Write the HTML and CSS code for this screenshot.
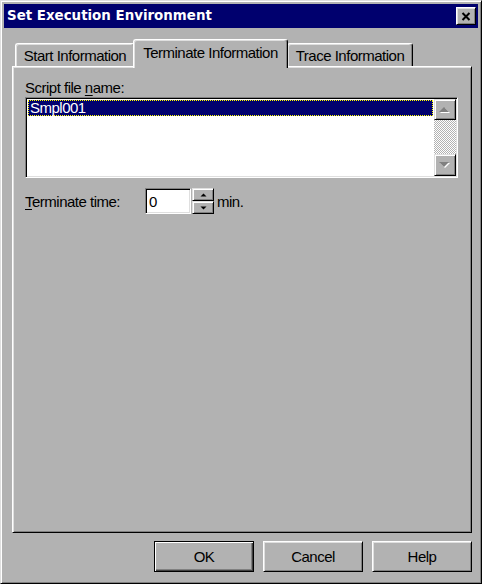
FILE: index.html
```html
<!DOCTYPE html>
<html lang="en">
<head>
<meta charset="utf-8">
<title>Set Execution Environment</title>
<link rel="stylesheet" href="styles.css">
</head>
<body>
<div class="window">
  <div class="titlebar">
    <span class="title">Set Execution Environment</span>
    <button class="close" type="button" aria-label="Close">
      <svg width="10" height="9" viewBox="0 0 10 9"><path d="M1.5 1 L8.5 8 M8.5 1 L1.5 8" stroke="#000" stroke-width="2" fill="none"/></svg>
    </button>
  </div>
  <div class="client">
    <div class="tabs">
      <div class="tab tab-start">Start Information</div>
      <div class="tab tab-active">Terminate Information</div>
      <div class="tab tab-trace">Trace Information</div>
    </div>
    <div class="panel">
      <div class="label">Script file <u>n</u>ame:</div>
      <div class="listbox">
        <div class="list">
          <div class="item selected">Smpl001</div>
        </div>
        <div class="scrollbar">
          <div class="sbtn sbtn-up">
            <svg width="12" height="7" viewBox="0 0 12 7"><polygon points="1,7 6,2 11,7" fill="#fff"/><polygon points="0,6 5,1 10,6" fill="#808080"/></svg>
          </div>
          <div class="track"></div>
          <div class="sbtn sbtn-down">
            <svg width="12" height="7" viewBox="0 0 12 7"><polygon points="1,1 11,1 6,6" fill="#fff"/><polygon points="0,0 10,0 5,5" fill="#808080"/></svg>
          </div>
        </div>
      </div>
      <div class="row">
        <span class="row-label"><u>T</u>erminate time:</span>
        <div class="edit">0</div>
        <div class="spin">
          <div class="spin-btn">
            <svg width="7" height="4" viewBox="0 0 7 4"><polygon points="0.5,3.5 3.5,0.5 6.5,3.5" fill="#000"/></svg>
          </div>
          <div class="spin-btn">
            <svg width="7" height="4" viewBox="0 0 7 4"><polygon points="0.5,0.5 6.5,0.5 3.5,3.5" fill="#000"/></svg>
          </div>
        </div>
        <span class="unit">min.</span>
      </div>
    </div>
    <div class="buttons">
      <button class="btn btn-default" type="button">OK</button>
      <button class="btn" type="button">Cancel</button>
      <button class="btn" type="button">Help</button>
    </div>
  </div>
</div>
</body>
</html>
```

FILE: styles.css
```css
html, body {
  margin: 0;
  padding: 0;
  background: #ffffff;
}

body {
  font-family: "Liberation Sans", Arial, sans-serif;
  font-size: 15px;
  line-height: 17px;
  letter-spacing: -0.5px;
  color: #000;
}

.window {
  width: 482px;
  height: 584px;
  box-sizing: border-box;
  background: #b2b2b2;
  border: 1px solid;
  border-color: #dfdfdf #000 #000 #dfdfdf;
  box-shadow: inset 1px 1px #fff, inset -1px -1px #808080;
  padding: 3px;
  display: flex;
  flex-direction: column;
}

.titlebar {
  height: 24px;
  flex: none;
  background: #00006e;
  display: flex;
  align-items: center;
  justify-content: space-between;
  padding: 0 2px 0 3px;
}

.title {
  font-family: "DejaVu Sans", Verdana, sans-serif;
  font-weight: bold;
  font-size: 13.4px;
  line-height: 16px;
  letter-spacing: 0;
  color: #fff;
  white-space: nowrap;
}

.close {
  width: 20px;
  height: 18px;
  padding: 0;
  margin: 0;
  box-sizing: border-box;
  background: #b2b2b2;
  border: 1px solid;
  border-color: #fff #000 #000 #fff;
  box-shadow: inset 1px 1px #dfdfdf, inset -1px -1px #808080;
  display: flex;
  align-items: center;
  justify-content: center;
}

.close svg {
  display: block;
}

.client {
  flex: 1;
  display: flex;
  flex-direction: column;
  padding: 11px 6px 8px 8px;
}

.tabs {
  height: 27px;
  flex: none;
  display: flex;
  align-items: flex-end;
  padding-left: 3px;
}

.tab {
  box-sizing: border-box;
  height: 23px;
  padding: 3px 0 2px;
  text-align: center;
  white-space: nowrap;
  background: #b2b2b2;
  border-top: 1px solid #fff;
  border-left: 1px solid #fff;
  border-right: 1px solid #000;
  border-radius: 3px 3px 0 0;
  box-shadow: inset -1px 0 #808080, inset 1px 1px #dfdfdf;
}

.tab-start {
  width: 120px;
}

.tab-active {
  position: relative;
  z-index: 2;
  width: 155px;
  height: 29px;
  margin: 0 -1px -2px -2px;
  padding-top: 4px;
}

.tab-trace {
  width: 126px;
}

.panel {
  flex: 1;
  box-sizing: border-box;
  border: 1px solid;
  border-color: #fff #000 #000 #fff;
  box-shadow: inset 1px 1px #dfdfdf, inset -1px -1px #808080;
  padding: 12px 12px;
  display: flex;
  flex-direction: column;
  align-items: flex-start;
}

.label {
  margin-bottom: 1px;
}

u {
  text-underline-offset: 2px;
}

.listbox {
  width: 433px;
  height: 81px;
  box-sizing: border-box;
  background: #fff;
  border: 1px solid;
  border-color: #808080 #fff #fff #808080;
  box-shadow: inset 1px 1px #000, inset -1px -1px #dfdfdf;
  padding: 1px;
  display: flex;
}

.list {
  flex: 1;
  padding: 1px;
}

.item {
  line-height: 13px;
  padding: 0 1px 1px;
  white-space: nowrap;
}

.selected {
  background: #00006e;
  color: #fff;
  border: 1px dotted #ffff00;
}

.scrollbar {
  width: 22px;
  display: flex;
  flex-direction: column;
}

.sbtn {
  height: 21px;
  box-sizing: border-box;
  background: #b2b2b2;
  border: 1px solid;
  border-color: #dfdfdf #000 #000 #dfdfdf;
  box-shadow: inset 1px 1px #fff, inset -1px -1px #808080;
  display: flex;
  align-items: center;
  justify-content: center;
}

.sbtn-down {
  height: 22px;
}

.sbtn svg {
  display: block;
}

.track {
  flex: 1;
  background: repeating-conic-gradient(#fff 0 25%, #b2b2b2 0 50%) 0 0 / 2px 2px;
}

.row {
  margin-top: 10px;
  display: flex;
  align-items: center;
}

.row-label {
  width: 120px;
}

.edit {
  width: 46px;
  height: 26px;
  box-sizing: border-box;
  background: #fff;
  border: 1px solid;
  border-color: #808080 #fff #fff #808080;
  box-shadow: inset 1px 1px #000, inset -1px -1px #dfdfdf;
  padding: 3px 3px 0;
  line-height: 19px;
}

.spin {
  margin-left: 1px;
  width: 22px;
  display: flex;
  flex-direction: column;
}

.spin-btn {
  height: 13px;
  box-sizing: border-box;
  background: #b2b2b2;
  border: 1px solid;
  border-color: #dfdfdf #000 #000 #dfdfdf;
  box-shadow: inset 1px 1px #fff, inset -1px -1px #808080;
  display: flex;
  align-items: center;
  justify-content: center;
}

.spin-btn svg {
  display: block;
}

.unit {
  margin-left: 3px;
}

.buttons {
  margin-top: 8px;
  display: flex;
  justify-content: flex-end;
  gap: 9px;
}

.btn {
  width: 100px;
  height: 31px;
  box-sizing: border-box;
  margin: 0;
  padding: 0;
  font: inherit;
  letter-spacing: inherit;
  color: #000;
  background: #b2b2b2;
  border: 1px solid;
  border-color: #fff #000 #000 #fff;
  box-shadow: inset 1px 1px #dfdfdf, inset -1px -1px #808080;
}

.btn-default {
  border-color: #000;
  box-shadow: inset 1px 1px #fff, inset -1px -1px #404040, inset -2px -2px #808080;
}
```
